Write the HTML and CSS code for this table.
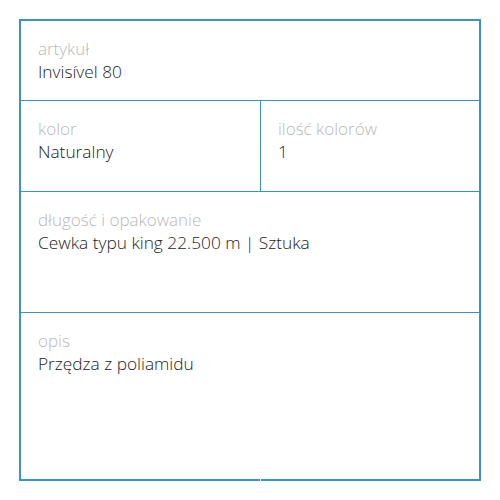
FILE: index.html
```html
<!DOCTYPE html>
<html>
<head>
<meta charset="utf-8">
<link rel="stylesheet" href="styles.css">
</head>
<body>
<div class="box">
  <div class="cell full r1">
    <div class="label">artykuł</div>
    <div class="value">Invisível 80</div>
  </div>
  <div class="cell left r2">
    <div class="label">kolor</div>
    <div class="value">Naturalny</div>
  </div>
  <div class="cell r2">
    <div class="label">ilość kolorów</div>
    <div class="value">1</div>
  </div>
  <div class="cell full r3">
    <div class="label">długość i opakowanie</div>
    <div class="value">Cewka typu king 22.500 m | Sztuka</div>
  </div>
  <div class="cell full r4">
    <div class="label">opis</div>
    <div class="value">Przędza z poliamidu</div>
  </div>
</div>
</body>
</html>
```
FILE: styles.css
```css
html, body {
  margin: 0;
  padding: 0;
  background: #fff;
}
body {
  padding: 19px;
  font-family: "Open Sans", sans-serif;
}
.box {
  position: relative;
  box-sizing: border-box;
  width: 462px;
  height: 462px;
  border: 2px solid #3794c8;
  display: grid;
  grid-template-columns: 240px 1fr;
  grid-template-rows: 80px 91px 121px 1fr;
}
.box::after {
  content: "";
  position: absolute;
  left: 239px;
  bottom: -2px;
  width: 1px;
  height: 2px;
  background: #fff;
}
.cell {
  box-sizing: border-box;
  padding: 16px 17px 0;
  border-bottom: 1px solid #3794c8;
}
.cell.r4 {
  border-bottom: none;
}
.full {
  grid-column: 1 / 3;
}
.left {
  border-right: 1px solid #3794c8;
}
.label {
  font-size: 17px;
  line-height: 23px;
  font-weight: 300;
  color: #b8b8b8;
}
.value {
  font-size: 17.3px;
  line-height: 23px;
  font-weight: 300;
  color: #222;
}
```
